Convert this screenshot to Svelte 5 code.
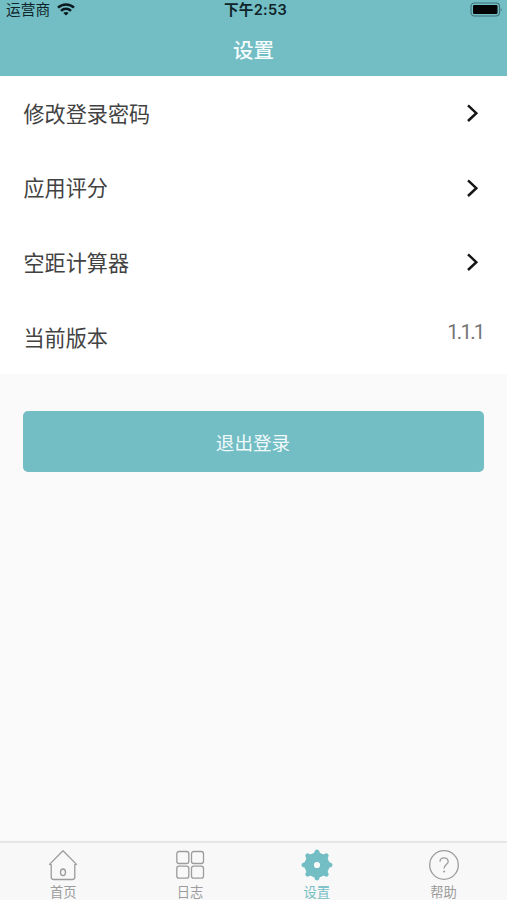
<script>
  const rows = ['修改登录密码', '应用评分', '空距计算器'];
  const tabs = [
    { id: 'home', label: '首页' },
    { id: 'log', label: '日志' },
    { id: 'settings', label: '设置' },
    { id: 'help', label: '帮助' }
  ];
  const active = 'settings';

  // Eight rounded teeth, evenly spaced around the gear body.
  const teeth = [0, 45, 90, 135, 180, 225, 270, 315];
</script>

<div class="screen">
  <header>
    <div class="status">
      <div class="carrier">
        <span>运营商</span>
        <svg width="18" height="13" viewBox="0 0 18 13">
          <g fill="none" stroke="#0b1a20" stroke-width="2.5">
            <path d="M1 4.7C5.4.4 12.6.4 17 4.7" />
            <path d="M4 7.8C6.8 5.1 11.2 5.1 14 7.8" />
          </g>
          <path d="M9 12.6 6.3 9.9C7.8 8.6 10.2 8.6 11.7 9.9Z" fill="#0b1a20" />
        </svg>
      </div>
      <span class="time">下午2:53</span>
      <div class="power">
        <svg width="33" height="15" viewBox="0 0 33 15">
          <rect x="1" y="1" width="28.5" height="13" rx="3.5" fill="none" stroke="#3f7076" stroke-width="1.1" />
          <rect x="3" y="3" width="24.5" height="9" rx="1.3" fill="#020405" />
          <path d="M30.8 5.5q1.5 2 0 4z" fill="#356a70" />
        </svg>
      </div>
    </div>
    <h1>设置</h1>
  </header>

  <ul>
    {#each rows as row}
      <li>
        <span class="label">{row}</span>
        <svg width="14" height="20" viewBox="0 0 14 20">
          <path d="M2 2.4 10.3 10.2 2 18" fill="none" stroke="#151515" stroke-width="2.5" />
        </svg>
      </li>
    {/each}
    <li>
      <span class="label">当前版本</span>
      <span class="version">1.1.1</span>
    </li>
  </ul>

  <button>退出登录</button>

  <nav>
    {#each tabs as tab}
      <div class="tab" class:active={tab.id === active}>
        <svg width="32" height="32" viewBox="0 0 32 32" fill="none" stroke="currentColor" stroke-width="1.3">
          {#if tab.id === 'home'}
            <path d="M4.2 15.6 2.5 15.4 16 1.7 29.5 15.4 27.8 15.6V28a2.5 2.5 0 0 1-2.5 2.5H6.7A2.5 2.5 0 0 1 4.2 28Z" stroke-linejoin="round" />
            <ellipse cx="16" cy="23.3" rx="2.5" ry="3.3" />
          {:else if tab.id === 'log'}
            <rect x="2.8" y="2.5" width="12" height="12" rx="2.2" />
            <rect x="17.5" y="2.5" width="12" height="12" rx="2.2" />
            <rect x="2.8" y="17.2" width="12" height="12" rx="2.2" />
            <rect x="17.5" y="17.2" width="12" height="12" rx="2.2" />
          {:else if tab.id === 'settings'}
            <g fill="currentColor" stroke="none">
              {#each teeth as angle}
                <path d="M10.8 5.2C12.8 4.5 13.4 4 13.7 2.3Q14 .5 16 .5T18.3 2.3C18.6 4 19.2 4.5 21.2 5.2L16 16Z" transform="rotate({angle} 16 16)" />
              {/each}
              <circle cx="16" cy="16" r="12.3" />
            </g>
            <circle cx="16" cy="16" r="3.1" fill="#fafafa" stroke="none" />
          {:else}
            <circle cx="16" cy="16" r="14.3" />
            <path d="M12 12.8C12 7.6 20.2 7.6 20.2 12.5 20.2 15.6 16.1 15.6 16.1 19.5" />
            <circle cx="16.1" cy="22.4" r="1" fill="currentColor" stroke="none" />
          {/if}
        </svg>
        <span>{tab.label}</span>
      </div>
    {/each}
  </nav>
</div>

<style>
  :global(body) {
    margin: 0;
  }
  .screen {
    width: 507px;
    height: 900px;
    display: flex;
    flex-direction: column;
    overflow: hidden;
    background: #fafafa;
    font-family: 'Liberation Sans', 'Noto Sans CJK SC', sans-serif;
    color: #424242;
  }
  header {
    height: 76px;
    flex: none;
    background: #73bdc4;
  }
  .status {
    display: grid;
    grid-template-columns: 1fr auto 1fr;
    align-items: center;
    height: 21px;
    padding: 0 4px 0 6px;
    box-sizing: border-box;
    font-size: 14.7px;
    line-height: 21px;
    color: #0f2529;
  }
  .carrier {
    display: flex;
    align-items: center;
    gap: 7px;
  }
  .carrier svg {
    margin-top: -3px;
  }
  .time {
    font-family: Inter, 'Noto Sans CJK SC', sans-serif;
    font-weight: 600;
    font-size: 14.6px;
    letter-spacing: 0.3px;
    margin-left: 2px;
  }
  .power {
    display: flex;
    justify-content: flex-end;
    margin-top: -3px;
  }
  h1 {
    margin: 13px 0 0;
    font-size: 20.5px;
    line-height: 30px;
    font-weight: 500;
    font-family: 'Noto Sans CJK SC', sans-serif;
    text-align: center;
    color: #f4fcfc;
  }
  ul {
    margin: 0;
    padding: 0;
    list-style: none;
    background: #fff;
  }
  li {
    display: flex;
    align-items: center;
    justify-content: space-between;
    height: 74.6px;
    padding: 0 23.5px;
    font-size: 21.1px;
    line-height: 30px;
  }
  .label {
    padding-top: 3px;
  }
  li svg {
    margin-right: 4px;
  }
  .version {
    margin-bottom: 10px;
    font-family: Roboto, sans-serif;
    font-size: 20.5px;
    letter-spacing: -1.8px;
    color: #757575;
  }
  button {
    margin: 37px 23px 0;
    height: 61px;
    padding: 0 1px 1px 0;
    border: 0;
    border-radius: 5px;
    background: #73bdc4;
    color: #f0fafb;
    font-family: 'Noto Sans CJK SC', sans-serif;
    font-size: 18.6px;
  }
  nav {
    display: flex;
    height: 59px;
    margin-top: auto;
    box-sizing: border-box;
    border-top: 2px solid #e6e6e6;
    background: #f8f8f8;
  }
  .tab {
    flex: 1;
    display: flex;
    flex-direction: column;
    align-items: center;
    gap: 2px;
    padding-top: 6px;
    color: #9c9c9c;
    font-size: 13.3px;
    line-height: 20px;
  }
  .tab svg {
    flex: none;
  }
  .tab.active {
    color: #73bdc4;
  }
</style>
